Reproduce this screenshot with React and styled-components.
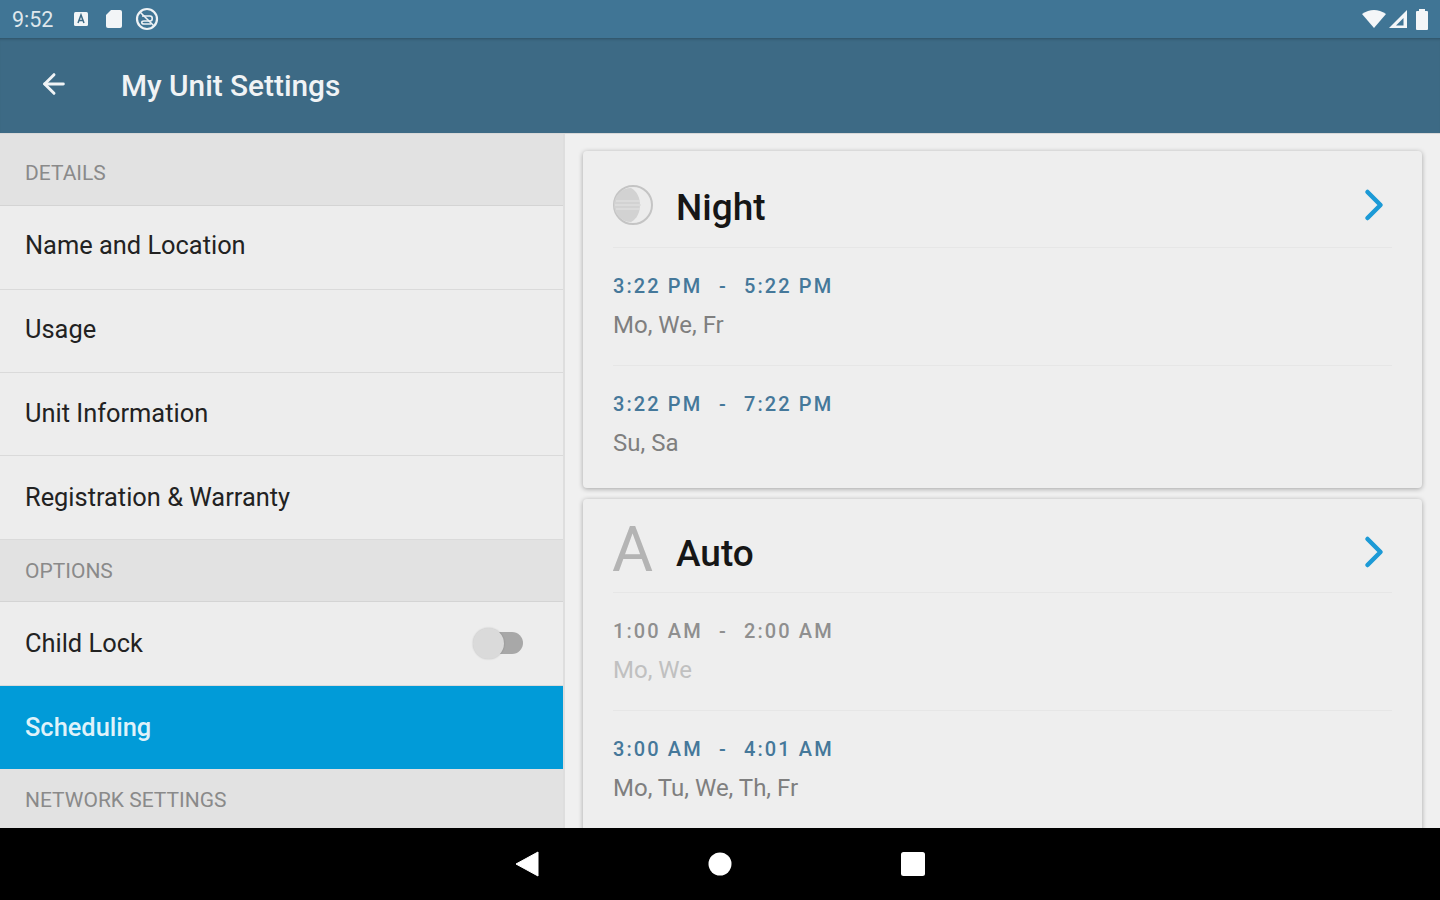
import styled, { createGlobalStyle } from 'styled-components';
import { ArrowLeft, ChevronRight } from 'lucide-react';

const GlobalStyle = createGlobalStyle`
  html, body {
    margin: 0;
    padding: 0;
    background: #000;
    font-family: Roboto, "Liberation Sans", sans-serif;
  }
  * { box-sizing: border-box; }
`;

const Screen = styled.div`
  width: 1440px;
  height: 900px;
  display: flex;
  flex-direction: column;
  overflow: hidden;
`;

const StatusBar = styled.div`
  height: 38px;
  flex: none;
  background: #407595;
  display: flex;
  align-items: center;
  justify-content: space-between;
  padding: 0 10px 0 12px;
`;

const StatusGroup = styled.div`
  display: flex;
  align-items: center;
  gap: ${({ $gap }) => $gap}px;
`;

const Clock = styled.span`
  font-size: 21.5px;
  width: 41px;
  margin-right: 4px;
  color: #dfe7ec;
`;

const AppBar = styled.div`
  height: 96px;
  flex: none;
  background: #3d6a85;
  box-shadow: inset 0 3px 3px -2px rgba(0, 0, 0, 0.25);
  border-bottom: 1px solid #d8d8d8;
  display: flex;
  align-items: center;
  padding-left: 38px;
  color: #f0f3f5;
`;

const BackButton = styled.div`
  width: 83px;
  height: 32px;
  display: flex;
  align-items: center;
  margin-bottom: 4px;
`;

const Title = styled.h1`
  margin: 0;
  font-size: 29.8px;
  font-weight: 500;
`;

const Body = styled.div`
  flex: 1;
  min-height: 0;
  display: flex;
  background: #f0f0f0;
  overflow: hidden;
`;

const Sidebar = styled.div`
  width: 565px;
  flex: none;
  border-right: 2px solid #dedede;
  display: flex;
  flex-direction: column;
`;

const SectionHeader = styled.div`
  height: ${({ $height }) => $height}px;
  flex: none;
  background: #e2e2e2;
  border-bottom: 1px solid #d4d4d4;
  display: flex;
  align-items: center;
  padding: ${({ $drop }) => $drop || 0}px 0 0 25px;
  font-size: 21px;
  color: #8a8a8a;
`;

const Row = styled.div`
  height: ${({ $height }) => $height || 83}px;
  flex: none;
  background: ${({ $active }) => ($active ? '#019bd8' : '#ededed')};
  border-bottom: 1px solid ${({ $active }) => ($active ? '#019bd8' : '#dadada')};
  color: ${({ $active }) => ($active ? '#dff2fa' : '#222')};
  display: flex;
  align-items: center;
  justify-content: space-between;
  padding: 0 40px ${({ $lift }) => $lift || 0}px 25px;
  font-size: 25.4px;
  font-weight: ${({ $active }) => ($active ? 500 : 400)};
`;

const Toggle = styled.div`
  position: relative;
  width: 50px;
  height: 22px;
  display: flex;
  justify-content: flex-end;
`;

const ToggleTrack = styled.div`
  width: 36px;
  height: 22px;
  border-radius: 11px;
  background: #a8a8a8;
`;

const ToggleThumb = styled.div`
  position: absolute;
  left: 0;
  top: -4px;
  width: 31px;
  height: 31px;
  border-radius: 50%;
  background: #dadada;
  box-shadow: 0 0 2px rgba(0, 0, 0, 0.2);
`;

const Content = styled.div`
  flex: 1;
  min-width: 0;
  padding: 17px 18px 0 18px;
  display: flex;
  flex-direction: column;
  gap: 11px;
`;

const Card = styled.div`
  flex: none;
  background: #eeeeee;
  border-radius: 4px;
  box-shadow: 0 1px 5px rgba(0, 0, 0, 0.32);
  padding: 0 30px 4px;
`;

const CardHeader = styled.div`
  height: ${({ $height }) => $height}px;
  padding-top: 12px;
  border-bottom: 1px solid #e6e6e6;
  display: flex;
  align-items: center;
  color: #161616;
`;

const ModeIcon = styled.div`
  width: 63px;
  flex: none;
  display: flex;
  align-items: center;
`;

const AutoGlyph = styled.span`
  margin: 0 0 4px -1px;
  font-size: 63px;
  line-height: 1;
  color: #b4b4b4;
`;

const ModeName = styled.div`
  flex: 1;
  padding-top: 4px;
  font-size: 37px;
  font-weight: 500;
`;

const Period = styled.div`
  height: 118px;
  border-bottom: 1px solid ${({ $last }) => ($last ? 'transparent' : '#e6e6e6')};
  padding-top: 27px;
`;

const TimeRange = styled.div`
  display: flex;
  font-size: 20px;
  line-height: 22px;
  letter-spacing: 2.1px;
  font-weight: 500;
  color: ${({ $muted }) => ($muted ? '#8f8f8f' : '#45789a')};
`;

const TimeValue = styled.span`
  width: 106px;
  white-space: nowrap;
`;

const TimeDash = styled.span`
  width: 25px;
`;

const Days = styled.div`
  margin-top: 14px;
  font-size: 24px;
  line-height: 28px;
  color: ${({ $muted }) => ($muted ? '#c0c0c0' : '#7f7f7f')};
`;

const NavBar = styled.div`
  height: 72px;
  flex: none;
  background: #000;
  display: flex;
  align-items: center;
  justify-content: center;
  gap: 169px;
`;

function MoonIcon() {
  return (
    <svg width="42" height="42" viewBox="0 0 42 42">
      <g transform="translate(-1 0)">
        <circle cx="21" cy="21" r="19" fill="#ececec" stroke="#c4c4c4" strokeWidth="2" />
        <path d="M19 4a17 17 0 0 0 0 34c6-3 9-10 9-17s-3-14-9-17z" fill="#d2d2d2" />
        <path d="M4 17h24M3 21h26M4 25h24" stroke="#dedede" strokeWidth="1.5" />
      </g>
    </svg>
  );
}

function Schedule({ from, to, days, muted, last }) {
  return (
    <Period $last={last}>
      <TimeRange $muted={muted}>
        <TimeValue>{from}</TimeValue>
        <TimeDash>-</TimeDash>
        <TimeValue>{to}</TimeValue>
      </TimeRange>
      <Days $muted={muted}>{days}</Days>
    </Period>
  );
}

function Arrow() {
  return <ChevronRight size={52} strokeWidth={2.1} color="#1c9ad6" style={{ marginRight: -8 }} />;
}

export default function App() {
  return (
    <Screen>
      <GlobalStyle />
      <StatusBar>
        <StatusGroup $gap={16}>
          <Clock>9:52</Clock>
          <svg width="16" height="16" viewBox="0 0 16 16">
            <rect x="1" y="1" width="14" height="14" rx="1.5" fill="#f2f5f7" />
            <path d="M5 12l3-8 3 8M6.200 9.500h3.600" stroke="#3d6a85" strokeWidth="1.500" fill="none" />
          </svg>
          <svg width="18" height="20" viewBox="0 0 18 20" style={{ marginRight: -4 }}>
            <path d="M6 1h9a2 2 0 0 1 2 2v14a2 2 0 0 1-2 2H3a2 2 0 0 1-2-2V6z" fill="#f2f5f7" />
          </svg>
          <svg width="24" height="24" viewBox="0 0 24 24" fill="none" stroke="#eef2f5" strokeWidth="2.200">
            <circle cx="12" cy="12" r="10" />
            <path d="M7 9h8c3 0 3 5 0 5H9c-3 0-3 3 0 3h7" strokeWidth="1.600" />
            <path d="M5 5l14 14" strokeWidth="1.600" />
          </svg>
        </StatusGroup>
        <StatusGroup $gap={2}>
          <svg width="24" height="20" viewBox="0 0 24 20">
            <path d="M0 5Q12 -3 24 5L12 19z" fill="#f4f6f8" />
          </svg>
          <svg width="20" height="20" viewBox="0 0 20 20">
            <path d="M19 1v18H1z" fill="#f4f6f8" />
            <path d="M15.500 9v7.500H8z" fill="#407595" />
          </svg>
          <svg width="16" height="22" viewBox="0 0 16 22" style={{ marginLeft: 4 }}>
            <path d="M3 3h2V1h6v2h2a1 1 0 0 1 1 1v17a1 1 0 0 1-1 1H3a1 1 0 0 1-1-1V4a1 1 0 0 1 1-1z" fill="#f4f6f8" />
          </svg>
        </StatusGroup>
      </StatusBar>

      <AppBar>
        <BackButton>
          <ArrowLeft size={32} strokeWidth={2.2} />
        </BackButton>
        <Title>My Unit Settings</Title>
      </AppBar>

      <Body>
        <Sidebar>
          <SectionHeader $height={72} $drop={7}>DETAILS</SectionHeader>
          <Row $height={84} $lift={5}>Name and Location</Row>
          <Row $lift={4}>Usage</Row>
          <Row $lift={2}>Unit Information</Row>
          <Row $height={84} $lift={1}>Registration &amp; Warranty</Row>
          <SectionHeader $height={62}>OPTIONS</SectionHeader>
          <Row $height={84} $lift={2}>
            Child Lock
            <Toggle>
              <ToggleTrack />
              <ToggleThumb />
            </Toggle>
          </Row>
          <Row $active>Scheduling</Row>
          <SectionHeader $height={60} $drop={2}>NETWORK SETTINGS</SectionHeader>
        </Sidebar>

        <Content>
          <Card>
            <CardHeader $height={97}>
              <ModeIcon>
                <MoonIcon />
              </ModeIcon>
              <ModeName>Night</ModeName>
              <Arrow />
            </CardHeader>
            <Schedule from="3:22 PM" to="5:22 PM" days="Mo, We, Fr" />
            <Schedule from="3:22 PM" to="7:22 PM" days="Su, Sa" last />
          </Card>
          <Card>
            <CardHeader $height={94}>
              <ModeIcon>
                <AutoGlyph>A</AutoGlyph>
              </ModeIcon>
              <ModeName>Auto</ModeName>
              <Arrow />
            </CardHeader>
            <Schedule from="1:00 AM" to="2:00 AM" days="Mo, We" muted />
            <Schedule from="3:00 AM" to="4:01 AM" days="Mo, Tu, We, Th, Fr" last />
          </Card>
        </Content>
      </Body>

      <NavBar>
        <svg width="24" height="26" viewBox="0 0 24 26">
          <path d="M23 1v24L1 13z" fill="#fff" stroke="#fff" strokeLinejoin="round" />
        </svg>
        <svg width="24" height="24" viewBox="0 0 24 24">
          <circle cx="12" cy="12" r="11.500" fill="#fff" />
        </svg>
        <svg width="24" height="24" viewBox="0 0 24 24">
          <rect width="24" height="24" rx="2.500" fill="#fff" />
        </svg>
      </NavBar>
    </Screen>
  );
}
